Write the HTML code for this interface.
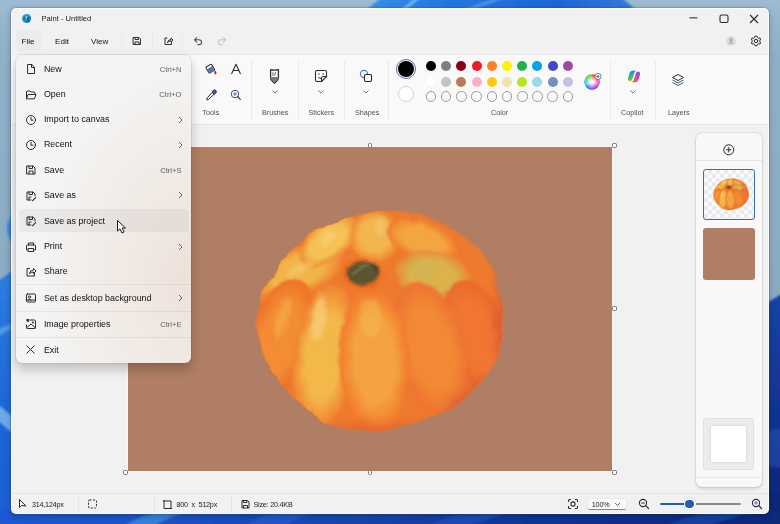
<!DOCTYPE html>
<html><head><meta charset="utf-8">
<style>
*{margin:0;padding:0;box-sizing:border-box}
html,body{width:780px;height:524px;overflow:hidden}
body{position:relative;font-family:"Liberation Sans",sans-serif;color:#111;-webkit-font-smoothing:antialiased;background:#8eadc9}
.a{position:absolute}
.t{position:absolute;white-space:nowrap;line-height:1}
svg{position:absolute;overflow:visible}
#win{left:11.3px;top:8.3px;width:757.5px;height:505.4px;border-radius:5px;background:#f1f1f1;overflow:hidden;border:1px solid rgba(255,255,255,.9);box-shadow:0 0 0 .6px rgba(40,60,80,.35),0 2px 6px rgba(0,20,40,.25)}
.sep{position:absolute;width:1px;background:#e9e9e9}
.lbl{font-size:7.2px;color:#505050}
.mi{font-size:8.9px;color:#111}
.sc{font-size:7.6px;color:#5e5e5e}
.st{font-size:7.2px;color:#1a1a1a;letter-spacing:-.2px}
.dot{position:absolute;width:10px;height:10px;border-radius:50%}
.ring{position:absolute;width:10.5px;height:10.5px;border-radius:50%;border:1px solid #9a9a9a}
.hd{position:absolute;width:4.6px;height:4.6px;border:1px solid #707070;background:#fff;border-radius:1.5px}
.ic{fill:none;stroke:#2b2b2b;stroke-width:1;stroke-linecap:round;stroke-linejoin:round}
</style></head>
<body>
<!-- desktop -->
<svg class="a" style="left:0;top:0" width="780" height="524" viewBox="0 0 780 524">
<defs>
<linearGradient id="dg" x1="0" y1="0" x2="0" y2="1">
<stop offset="0" stop-color="#9dbbd2"/><stop offset=".1" stop-color="#90b0c8"/><stop offset="1" stop-color="#86a6c0"/>
</linearGradient>
<linearGradient id="bl" x1="0" y1="0" x2="1" y2="0">
<stop offset="0" stop-color="#3a90ea"/><stop offset="0.3" stop-color="#2478e0"/><stop offset="0.7" stop-color="#1d66d8"/><stop offset="1" stop-color="#3a7ad8"/>
</linearGradient>
<linearGradient id="lb" x1="0" y1="0" x2="0" y2="1">
<stop offset="0" stop-color="#2c7ee4"/><stop offset=".5" stop-color="#1f68d8"/><stop offset="1" stop-color="#1a5cd4"/>
</linearGradient>
<linearGradient id="rb" x1="0" y1="0" x2="0" y2="1">
<stop offset="0" stop-color="#1a44a8"/><stop offset=".6" stop-color="#0f3090"/><stop offset="1" stop-color="#0b2470"/>
</linearGradient>
<linearGradient id="bb" x1="0" y1="0" x2="1" y2="0">
<stop offset="0" stop-color="#1a5ad0"/><stop offset="0.25" stop-color="#1a50c0"/><stop offset="0.5" stop-color="#1442a8"/><stop offset="0.8" stop-color="#0e2e88"/><stop offset="1" stop-color="#0d2a7a"/>
</linearGradient>
<filter id="dbl"><feGaussianBlur stdDeviation="1.2"/></filter>
</defs>
<rect width="780" height="524" fill="url(#dg)"/>
<g filter="url(#dbl)">
<path d="M385 -5 Q375 2 362 14 L640 14 Q630 4 618 -5Z" fill="url(#bl)"/>
<path d="M395 14 L420 -5 L424 -5 L400 14Z" fill="#8cd0f8" opacity=".7"/>
<path d="M455 14 Q480 2 510 -5 L516 -5 Q485 4 462 14Z" fill="#6ab8f0" opacity=".6"/>
<path d="M-5 283 Q6 276 16 268 L16 530 L-5 530Z" fill="url(#lb)"/>
<path d="M16 210 Q-2 228 16 248Z" fill="#3a8ae6"/>
<path d="M-5 330 L16 322 L16 326 L-5 338Z" fill="#6ab0f0" opacity=".6"/>
<path d="M-5 402 L16 420 L16 436 L-5 418Z" fill="#8cc8f0" opacity=".7"/>
<path d="M755 310 L785 292 L785 530 L755 530Z" fill="url(#rb)"/>
<path d="M760 440 Q772 425 785 430 L785 470 Q772 462 760 470Z" fill="#2452b0" opacity=".6"/>
<rect x="-5" y="510" width="790" height="20" fill="url(#bb)"/>
<path d="M120 530 Q140 512 175 510 L190 510 Q160 520 150 530Z" fill="#4aa0e8" opacity=".6"/>
<path d="M240 530 Q260 512 300 510 L320 510 Q290 520 280 530Z" fill="#2a60d0" opacity=".6"/>
<path d="M420 530 Q450 512 500 510 L520 510 Q480 520 460 530Z" fill="#2a5ad0" opacity=".5"/>
<path d="M660 530 Q690 512 730 510 L760 510 Q720 520 700 530Z" fill="#1f4fb8" opacity=".6"/>
</g>
</svg>

<div id="win" class="a"></div>
<!-- ribbon -->
<div class="a" style="left:12px;top:54px;width:757px;height:71px;background:#f9f9f9;border-top:1px solid #e9e9e9;border-bottom:1px solid #e4e4e4"></div>
<!-- status bar line -->
<div class="a" style="left:12px;top:493px;width:757px;height:1px;background:#e2e2e2"></div>

<!-- title bar -->
<svg style="left:21px;top:13px" width="11" height="11" viewBox="0 0 11 11">
<defs><linearGradient id="pi" x1="0" y1="0" x2="1" y2="1"><stop offset="0" stop-color="#2ab8c8"/><stop offset=".5" stop-color="#1c8ed8"/><stop offset="1" stop-color="#1058c0"/></linearGradient></defs>
<path d="M5.6 1 Q9.8 1.2 10 5.4 Q9.8 9.6 5.6 10 Q1.4 9.8 1 5.6 Q1.2 1.4 5.6 1Z" fill="url(#pi)"/>
<path d="M2 7 Q2.2 4 3.6 3 L4.4 6.5Z" fill="#3a6a50" opacity=".8"/>
<path d="M6 2.5 Q8.5 3 8.6 5.5 L6.5 8.5 Q5.5 6 6 2.5Z" fill="#2b4f8c" opacity=".7"/>
<path d="M4.5 3.5 Q6 2.5 7 3.5 L5 7Z" fill="#7fe0f0" opacity=".8"/>
</svg>
<div class="t" style="left:41.5px;top:14.6px;font-size:7.6px;color:#1a1a1a">Paint - Untitled</div>
<svg style="left:689px;top:17px" width="9" height="2"><rect x="0.5" y="0.3" width="8" height="1.1" fill="#333"/></svg>
<svg style="left:719px;top:14px" width="10" height="10" viewBox="0 0 10 10"><rect x="1" y="1" width="8" height="7.5" rx="1.6" fill="none" stroke="#2b2b2b" stroke-width="1.1"/></svg>
<svg style="left:749px;top:14px" width="10" height="10" viewBox="0 0 10 10"><path d="M1 1L9 9M9 1L1 9" stroke="#2b2b2b" stroke-width="1.1"/></svg>

<!-- menu bar -->
<div class="a" style="left:16px;top:30px;width:25.5px;height:21px;border-radius:4px;background:#ebebeb"></div>
<div class="t" style="left:21.5px;top:38px;font-size:8.1px">File</div>
<div class="t" style="left:55px;top:38px;font-size:8.1px">Edit</div>
<div class="t" style="left:91px;top:38px;font-size:8.1px">View</div>
<div class="sep" style="left:121px;top:32px;height:17px"></div>
<div class="sep" style="left:152px;top:32px;height:17px"></div>
<div class="sep" style="left:182px;top:32px;height:17px"></div>
<svg style="left:132px;top:36px" width="10" height="10" viewBox="0 0 10 10"><path class="ic" d="M1.5 1.5H7L8.5 3V8.5H1.5Z M3 1.5V3.5H6.5V1.5 M3 8.5V6H7V8.5" stroke-width="1.1"/></svg>
<svg style="left:163px;top:36px" width="11" height="10" viewBox="0 0 11 10"><path class="ic" d="M4 2H2V8.5H8.5V6.5 M4.5 6.5Q5 3.5 8 3.5V2L10 4L8 6V4.8Q6 4.8 4.5 6.5" stroke-width="1.1"/></svg>
<svg style="left:193px;top:36px" width="10" height="10" viewBox="0 0 10 10"><path d="M3.8 1.5L1.5 3.8L3.8 6.1M1.5 3.8H5.8Q8.6 3.8 8.6 6.2Q8.6 8.6 5.8 8.6H4.8" fill="none" stroke="#4a4a4a" stroke-width="1.05" stroke-linecap="round" stroke-linejoin="round"/></svg>
<svg style="left:217px;top:36px" width="10" height="10" viewBox="0 0 10 10"><path d="M6.2 1.5L8.5 3.8L6.2 6.1M8.5 3.8H4.2Q1.4 3.8 1.4 6.2Q1.4 8.6 4.2 8.6H5.2" fill="none" stroke="#c2c2c2" stroke-width="1.05" stroke-linecap="round" stroke-linejoin="round"/></svg>
<div class="a" style="left:725.5px;top:36px;width:10px;height:10px;border-radius:50%;background:#dedede"></div>
<svg style="left:725.5px;top:36px" width="10" height="10" viewBox="0 0 10 10"><circle cx="5" cy="3.8" r="1.4" fill="none" stroke="#8a8a8a" stroke-width=".8"/><path d="M2.8 7.5Q5 5.3 7.2 7.5" fill="none" stroke="#8a8a8a" stroke-width=".8"/></svg>
<svg style="left:750px;top:35px" width="12" height="12" viewBox="0 0 12 12"><path class="ic" stroke-width="1.05" d="M6 1.2 L7.1 1.4 L7.5 2.7 L8.6 3.3 L9.9 2.9 L10.6 4 L9.9 5.2 L9.9 6.8 L10.6 8 L9.9 9.1 L8.6 8.7 L7.5 9.3 L7.1 10.6 L6 10.8 L4.9 10.6 L4.5 9.3 L3.4 8.7 L2.1 9.1 L1.4 8 L2.1 6.8 L2.1 5.2 L1.4 4 L2.1 2.9 L3.4 3.3 L4.5 2.7 L4.9 1.4Z"/><circle cx="6" cy="6" r="1.7" class="ic" stroke-width="1.05"/></svg>
<!-- ribbon content -->
<!-- tools -->
<svg style="left:204px;top:62px" width="14" height="14" viewBox="0 0 14 14">
<g transform="rotate(-32 6.5 6.5)">
<rect x="3" y="3" width="6.5" height="7" rx=".8" fill="#fff" stroke="#2b2b2b" stroke-width="1"/>
<rect x="3.5" y="6" width="5.5" height="3.5" fill="#4677c9"/>
<path d="M3.5 6L9 6" stroke="#2b2b2b" stroke-width=".6"/>
</g>
<path d="M11 8.2 Q13 10.4 12.5 11.6 Q11.7 12.8 10.4 12 Q9.6 10.8 11 8.2Z" fill="#a8282c"/>
</svg>
<svg style="left:230px;top:63px" width="12" height="12" viewBox="0 0 12 12"><path d="M1.5 11L6 1.2L10.5 11M3.2 7.5H8.8" fill="none" stroke="#2b2b2b" stroke-width="1.05" stroke-linejoin="round"/></svg>
<svg style="left:205px;top:88px" width="13" height="13" viewBox="0 0 13 13">
<path d="M8 2.5 Q9.5 1 11 2.5 Q12 4 10.5 5.5 L9.5 6.5 L7 4Z" fill="#2f5fb8" stroke="#2b2b2b" stroke-width=".8"/>
<path d="M7.2 4.5 L9 6.3 L3.5 11.5 L2 12 L1.8 11 L2.2 10Z" fill="#fff" stroke="#2b2b2b" stroke-width="1" stroke-linejoin="round"/>
</svg>
<svg style="left:230px;top:89px" width="12" height="12" viewBox="0 0 12 12">
<circle cx="5" cy="5" r="3.7" fill="#fff" stroke="#3a3a3a" stroke-width=".9"/>
<path d="M7.6 7.6 L10.3 10.3" stroke="#2b2b2b" stroke-width="1.2" stroke-linecap="round"/>
<path d="M5 3V7M3 5H7" stroke="#2f6ad0" stroke-width=".9"/>
</svg>
<div class="t lbl" style="left:202.5px;top:108.8px">Tools</div>
<div class="sep" style="left:251px;top:61px;height:58px"></div>
<!-- brushes -->
<svg style="left:268px;top:67px" width="13" height="18" viewBox="0 0 13 18">
<path d="M2.6 2.6 Q6.5 3.6 10.4 2.6 L10.4 10.6 Q10.4 13 6.5 16.2 Q2.6 13 2.6 10.6Z" fill="#fff" stroke="#333" stroke-width="1.3" stroke-linejoin="round"/>
<path d="M3.3 10 H9.7 V10.6 Q9.7 12.6 6.5 15.2 Q3.3 12.6 3.3 10.6Z" fill="#7a7a7a"/>
<path d="M5 5.2 V9 M7.6 5.2 L6.6 8.6" stroke="#666" stroke-width="1"/>
</svg>
<svg style="left:271px;top:89px" width="8" height="5" viewBox="0 0 8 5"><path d="M1.5 1.5L4 4L6.5 1.5" fill="none" stroke="#666" stroke-width=".9"/></svg>
<div class="t lbl" style="left:262px;top:108.8px">Brushes</div>
<div class="sep" style="left:298px;top:61px;height:58px"></div>
<!-- stickers -->
<svg style="left:314px;top:69px" width="14" height="14" viewBox="0 0 14 14">
<path d="M3 1.5 H11 Q12.5 1.5 12.5 3 V7.5 L7.5 12.5 H3 Q1.5 12.5 1.5 11 V3 Q1.5 1.5 3 1.5Z" fill="#fff" stroke="#2b2b2b" stroke-width="1.1" stroke-linejoin="round"/>
<path d="M12.5 7.5 H9.5 Q7.5 7.5 7.5 9.5 V12.5" fill="none" stroke="#2b2b2b" stroke-width="1.1"/>
<circle cx="4.8" cy="5" r=".8" fill="#2b2b2b"/><circle cx="9.2" cy="5" r=".8" fill="#2b2b2b"/>
<path d="M4 8 Q5 9.5 7 9.3" fill="none" stroke="#2b2b2b" stroke-width="1"/>
</svg>
<svg style="left:317px;top:89px" width="8" height="5" viewBox="0 0 8 5"><path d="M1.5 1.5L4 4L6.5 1.5" fill="none" stroke="#666" stroke-width=".9"/></svg>
<div class="t lbl" style="left:308.5px;top:108.8px">Stickers</div>
<div class="sep" style="left:344px;top:61px;height:58px"></div>
<!-- shapes -->
<svg style="left:359px;top:69px" width="14" height="14" viewBox="0 0 14 14">
<circle cx="5" cy="5" r="3.6" fill="none" stroke="#3f7bd0" stroke-width="1.1"/>
<rect x="5.5" y="5.5" width="7" height="7" rx="1.2" fill="#f9f9f9" stroke="#2b2b2b" stroke-width="1.1"/>
</svg>
<svg style="left:362px;top:89px" width="8" height="5" viewBox="0 0 8 5"><path d="M1.5 1.5L4 4L6.5 1.5" fill="none" stroke="#666" stroke-width=".9"/></svg>
<div class="t lbl" style="left:355px;top:108.8px">Shapes</div>
<div class="sep" style="left:388px;top:61px;height:58px"></div>
<!-- colors -->
<div class="a" style="left:396px;top:59px;width:20px;height:20px;border-radius:50%;border:1.3px solid #5a6f9a;background:#f9f9f9"></div>
<div class="a" style="left:398px;top:61px;width:16px;height:16px;border-radius:50%;background:#000"></div>
<div class="a" style="left:398px;top:86px;width:16px;height:16px;border-radius:50%;background:#fff;border:1px solid #d2d2d2"></div>
<div class="dot" style="left:426.0px;top:61px;background:#000000"></div>
<div class="dot" style="left:426.0px;top:76.5px;background:#ffffff;box-shadow:0 0 0 .5px #eee"></div>
<div class="ring" style="left:425.8px;top:91.3px"></div>
<div class="dot" style="left:441.2px;top:61px;background:#7f7f7f"></div>
<div class="dot" style="left:441.2px;top:76.5px;background:#c3c3c3"></div>
<div class="ring" style="left:440.9px;top:91.3px"></div>
<div class="dot" style="left:456.4px;top:61px;background:#880015"></div>
<div class="dot" style="left:456.4px;top:76.5px;background:#b97a57"></div>
<div class="ring" style="left:456.1px;top:91.3px"></div>
<div class="dot" style="left:471.6px;top:61px;background:#ed1c24"></div>
<div class="dot" style="left:471.6px;top:76.5px;background:#ffaec9"></div>
<div class="ring" style="left:471.4px;top:91.3px"></div>
<div class="dot" style="left:486.8px;top:61px;background:#ff7f27"></div>
<div class="dot" style="left:486.8px;top:76.5px;background:#ffc90e"></div>
<div class="ring" style="left:486.6px;top:91.3px"></div>
<div class="dot" style="left:502.0px;top:61px;background:#fff200"></div>
<div class="dot" style="left:502.0px;top:76.5px;background:#efe4b0"></div>
<div class="ring" style="left:501.8px;top:91.3px"></div>
<div class="dot" style="left:517.2px;top:61px;background:#22b14c"></div>
<div class="dot" style="left:517.2px;top:76.5px;background:#b5e61d"></div>
<div class="ring" style="left:517.0px;top:91.3px"></div>
<div class="dot" style="left:532.4px;top:61px;background:#00a2e8"></div>
<div class="dot" style="left:532.4px;top:76.5px;background:#99d9ea"></div>
<div class="ring" style="left:532.1px;top:91.3px"></div>
<div class="dot" style="left:547.6px;top:61px;background:#3f48cc"></div>
<div class="dot" style="left:547.6px;top:76.5px;background:#7092be"></div>
<div class="ring" style="left:547.4px;top:91.3px"></div>
<div class="dot" style="left:562.8px;top:61px;background:#a349a4"></div>
<div class="dot" style="left:562.8px;top:76.5px;background:#c8bfe7"></div>
<div class="ring" style="left:562.5px;top:91.3px"></div>
<div class="t lbl" style="left:491px;top:108.8px">Color</div>
<svg style="left:584px;top:74px" width="17" height="17" viewBox="0 0 17 17">
<defs><radialGradient id="wh" cx=".5" cy=".5" r=".5"><stop offset="0" stop-color="#fff"/><stop offset=".25" stop-color="#fff" stop-opacity=".9"/><stop offset="1" stop-color="#fff" stop-opacity="0"/></radialGradient></defs>
<path d="M8 8 L8 0.3 A7.7 7.7 0 0 1 14.7 4.2Z" fill="#ff3030"/>
<path d="M8 8 L14.7 4.2 A7.7 7.7 0 0 1 14.7 11.8Z" fill="#ff2ea0"/>
<path d="M8 8 L14.7 11.8 A7.7 7.7 0 0 1 8 15.7Z" fill="#8a2be2"/>
<path d="M8 8 L8 15.7 A7.7 7.7 0 0 1 1.3 11.8Z" fill="#3060ff"/>
<path d="M8 8 L1.3 11.8 A7.7 7.7 0 0 1 1.3 4.2Z" fill="#20c0e0"/>
<path d="M8 8 L1.3 4.2 A7.7 7.7 0 0 1 8 0.3Z" fill="#40d040"/>
<circle cx="8" cy="8" r="7.7" fill="url(#wh)"/>
<circle cx="14" cy="2.5" r="3" fill="#fff" stroke="#555" stroke-width=".8"/>
<path d="M14 1V4M12.5 2.5H15.5" stroke="#444" stroke-width=".8"/>
</svg>
<div class="sep" style="left:610px;top:61px;height:58px"></div>
<!-- copilot -->
<svg style="left:626.5px;top:70px" width="14" height="13" viewBox="0 0 14 13">
<defs>
<linearGradient id="cp1" x1="0" y1="0" x2=".3" y2="1"><stop offset="0" stop-color="#1e6fe0"/><stop offset=".45" stop-color="#1fb0c8"/><stop offset=".75" stop-color="#52c43a"/><stop offset="1" stop-color="#e8c020"/></linearGradient>
<linearGradient id="cp2" x1=".7" y1="0" x2=".2" y2="1"><stop offset="0" stop-color="#8a4ad8"/><stop offset=".5" stop-color="#e04a9a"/><stop offset="1" stop-color="#f26a30"/></linearGradient>
</defs>
<path d="M1.2 7.5 L2.6 3 Q3.4 0.8 5.6 0.8 H9.6 Q7.8 1.2 7.2 3.2 L5.6 8.6 Q4.8 11.4 2.6 11.4 Q0.4 11 1.2 7.5Z" fill="url(#cp1)"/>
<path d="M12.8 5.5 L11.4 10 Q10.6 12.2 8.4 12.2 H4.4 Q6.2 11.8 6.8 9.8 L8.4 4.4 Q9.2 1.6 11.4 1.6 Q13.6 2 12.8 5.5Z" fill="url(#cp2)"/>
</svg>
<svg style="left:629px;top:89px" width="8" height="5" viewBox="0 0 8 5"><path d="M1.5 1.5L4 4L6.5 1.5" fill="none" stroke="#666" stroke-width=".9"/></svg>
<div class="t lbl" style="left:621px;top:108.8px">Copilot</div>
<div class="sep" style="left:655px;top:61px;height:58px"></div>
<!-- layers -->
<svg style="left:671px;top:73px" width="14" height="14" viewBox="0 0 14 14">
<path d="M7 1.5 L12.5 4.5 L7 7.5 L1.5 4.5Z" fill="none" stroke="#2b2b2b" stroke-width="1" stroke-linejoin="round"/>
<path d="M1.5 7 L7 10 L12.5 7" fill="none" stroke="#3d5a8a" stroke-width="1" stroke-linejoin="round"/>
<path d="M1.5 9.5 L7 12.5 L12.5 9.5" fill="none" stroke="#3d5a8a" stroke-width="1" stroke-linejoin="round"/>
</svg>
<div class="t lbl" style="left:668px;top:108.8px">Layers</div>
<!-- canvas -->
<div class="a" style="left:126.5px;top:146px;width:487px;height:326px;background:#fdf3ee"></div>
<div class="a" style="left:127.5px;top:147px;width:484.8px;height:323.6px;background:#b07e64"></div>
<svg style="left:127.5px;top:147px" width="485" height="324" viewBox="127.5 147 485 324">
<defs>
<clipPath id="pc"><path d="M257.3 334 C255.9 325.0 257.8 317.4 259 310 C260.2 302.6 261.4 296.9 264.8 289.3 C268.2 281.7 273.1 273.2 279.7 264.5 C286.3 255.8 296.2 243.8 304.5 237.2 C312.8 230.6 320.2 228.5 329.3 224.8 C338.4 221.1 348.2 217.1 359 214.8 C369.8 212.5 382.3 210.5 393.9 210.9 C405.5 211.3 417.9 213.8 428.6 217.3 C439.4 220.9 449.3 226.0 458.4 232.2 C467.5 238.4 476.6 245.0 483.2 254.5 C489.8 264.0 494.9 276.9 498 289.3 C501.1 301.7 502.8 316.6 502 329 C501.2 341.4 498.6 353.0 493 363.8 C487.4 374.6 477.4 385.3 468.3 393.6 C459.2 401.9 450.9 407.6 438.5 413.4 C426.1 419.2 408.0 425.4 393.9 428.3 C379.8 431.2 366.4 432.5 354 430.8 C341.6 429.1 330.1 424.6 319.4 418.4 C308.7 412.2 298.3 402.7 289.6 393.6 C280.9 384.5 272.6 373.7 267.2 363.8 C261.8 353.9 258.7 343.0 257.3 334Z"/></clipPath>
<radialGradient id="gA"><stop offset="0" stop-color="#f38c34"/><stop offset=".6" stop-color="#f38c34"/><stop offset="1" stop-color="#f07026"/></radialGradient>
<radialGradient id="gB"><stop offset="0" stop-color="#f3b84a"/><stop offset=".6" stop-color="#f3b84a"/><stop offset="1" stop-color="#f08030"/></radialGradient>
<radialGradient id="gC"><stop offset="0" stop-color="#f4a242"/><stop offset=".6" stop-color="#f4a242"/><stop offset="1" stop-color="#f2782a"/></radialGradient>
<radialGradient id="gD"><stop offset="0" stop-color="#f28a34"/><stop offset=".6" stop-color="#f28a34"/><stop offset="1" stop-color="#ee7230"/></radialGradient>
<radialGradient id="gE"><stop offset="0" stop-color="#f07630"/><stop offset=".6" stop-color="#f07630"/><stop offset="1" stop-color="#ea6a2c"/></radialGradient>
<radialGradient id="gT1"><stop offset="0" stop-color="#f2b448"/><stop offset=".6" stop-color="#f2b448"/><stop offset="1" stop-color="#f08030"/></radialGradient>
<radialGradient id="gT2"><stop offset="0" stop-color="#f4c254"/><stop offset=".6" stop-color="#f4c254"/><stop offset="1" stop-color="#f08a34"/></radialGradient>
<radialGradient id="gT3"><stop offset="0" stop-color="#f2b650"/><stop offset=".6" stop-color="#f2b650"/><stop offset="1" stop-color="#f08a30"/></radialGradient>
<radialGradient id="gT4"><stop offset="0" stop-color="#f3a640"/><stop offset=".6" stop-color="#f3a640"/><stop offset="1" stop-color="#f07a2c"/></radialGradient>
<radialGradient id="gT5"><stop offset="0" stop-color="#dcb24c"/><stop offset=".6" stop-color="#dcb24c"/><stop offset="1" stop-color="#e88a34"/></radialGradient>
<filter id="disp" x="-10%" y="-10%" width="120%" height="120%"><feTurbulence type="fractalNoise" baseFrequency="0.06" numOctaves="2" seed="3"/><feDisplacementMap in="SourceGraphic" scale="6" xChannelSelector="R" yChannelSelector="G"/></filter>
<filter id="b4" x="-50%" y="-50%" width="200%" height="200%"><feGaussianBlur stdDeviation="1.6"/></filter>
<filter id="b2" x="-50%" y="-50%" width="200%" height="200%"><feGaussianBlur stdDeviation="2"/></filter>
<filter id="b1" x="-50%" y="-50%" width="200%" height="200%"><feGaussianBlur stdDeviation="0.8"/></filter>
<filter id="b6" x="-50%" y="-50%" width="200%" height="200%"><feGaussianBlur stdDeviation="4"/></filter>
</defs>
<g id="pk" filter="url(#disp)">
<path d="M257.3 334 C255.9 325.0 257.8 317.4 259 310 C260.2 302.6 261.4 296.9 264.8 289.3 C268.2 281.7 273.1 273.2 279.7 264.5 C286.3 255.8 296.2 243.8 304.5 237.2 C312.8 230.6 320.2 228.5 329.3 224.8 C338.4 221.1 348.2 217.1 359 214.8 C369.8 212.5 382.3 210.5 393.9 210.9 C405.5 211.3 417.9 213.8 428.6 217.3 C439.4 220.9 449.3 226.0 458.4 232.2 C467.5 238.4 476.6 245.0 483.2 254.5 C489.8 264.0 494.9 276.9 498 289.3 C501.1 301.7 502.8 316.6 502 329 C501.2 341.4 498.6 353.0 493 363.8 C487.4 374.6 477.4 385.3 468.3 393.6 C459.2 401.9 450.9 407.6 438.5 413.4 C426.1 419.2 408.0 425.4 393.9 428.3 C379.8 431.2 366.4 432.5 354 430.8 C341.6 429.1 330.1 424.6 319.4 418.4 C308.7 412.2 298.3 402.7 289.6 393.6 C280.9 384.5 272.6 373.7 267.2 363.8 C261.8 353.9 258.7 343.0 257.3 334Z" fill="#ee7a2e" filter="url(#b1)"/>
<g clip-path="url(#pc)">
<g filter="url(#b4)">
<ellipse cx="298" cy="272" rx="48" ry="24" fill="url(#gT1)" transform="rotate(-25 298 272)"/>
<ellipse cx="328" cy="241" rx="35" ry="19" fill="url(#gT2)" transform="rotate(-40 328 241)"/>
<ellipse cx="374" cy="236" rx="24" ry="26" fill="url(#gT3)" transform="rotate(0 374 236)"/>
<ellipse cx="422" cy="240" rx="38" ry="19" fill="url(#gT4)" transform="rotate(20 422 240)"/>
<ellipse cx="432" cy="276" rx="38" ry="24" fill="url(#gT5)" transform="rotate(12 432 276)"/>
<ellipse cx="280" cy="338" rx="30" ry="62" fill="url(#gA)" transform="rotate(16 280 338)"/>
<ellipse cx="476" cy="336" rx="30" ry="58" fill="url(#gE)" transform="rotate(-18 476 336)"/>
<ellipse cx="324" cy="356" rx="31" ry="72" fill="url(#gB)" transform="rotate(7 324 356)"/>
<ellipse cx="430" cy="348" rx="34" ry="68" fill="url(#gD)" transform="rotate(-14 430 348)"/>
<ellipse cx="374" cy="360" rx="35" ry="72" fill="url(#gC)" transform="rotate(-2 374 360)"/>
</g>
<g filter="url(#b2)">
<ellipse cx="318" cy="318" rx="7" ry="22" fill="#f6d080" opacity="0.7" transform="rotate(8 318 318)"/>
<ellipse cx="300" cy="268" rx="14" ry="5" fill="#f5c868" opacity="0.7" transform="rotate(-25 300 268)"/>
<ellipse cx="327" cy="238" rx="10" ry="5" fill="#f6d07a" opacity="0.7" transform="rotate(-40 327 238)"/>
<ellipse cx="380" cy="226" rx="6" ry="10" fill="#f5ca70" opacity="0.6" transform="rotate(0 380 226)"/>
<ellipse cx="420" cy="268" rx="14" ry="7" fill="#ccb458" opacity="0.6" transform="rotate(12 420 268)"/>
<ellipse cx="370" cy="318" rx="10" ry="20" fill="#f4b84e" opacity="0.6" transform="rotate(0 370 318)"/>
<ellipse cx="282" cy="318" rx="6" ry="22" fill="#f5b04a" opacity="0.6" transform="rotate(16 282 318)"/>
</g>
<ellipse cx="505" cy="325" rx="10" ry="80" fill="#d44c30" opacity=".5" filter="url(#b6)"/>
<ellipse cx="470" cy="400" rx="34" ry="12" fill="#d44c30" opacity=".45" filter="url(#b6)" transform="rotate(-35 470 400)"/>
<ellipse cx="390" cy="432" rx="70" ry="8" fill="#dc5430" opacity=".45" filter="url(#b6)"/>
</g>
<ellipse cx="362" cy="274" rx="19" ry="13" fill="#e4601e" filter="url(#b2)"/>
<path d="M346 271 Q350 263 365 262 Q379 263 380 271 Q377 283 360 285 Q348 283 346 271Z" fill="#5a5632" filter="url(#b1)"/>
<path d="M352 274 Q358 266 368 265" stroke="#86865a" stroke-width="1.6" fill="none" filter="url(#b1)"/>
<path d="M372 266 L378 272" stroke="#3e3c22" stroke-width="1.5" fill="none" filter="url(#b1)"/>
</g>
</svg>
<div class="hd" style="left:123px;top:143px"></div>
<div class="hd" style="left:367.5px;top:143px"></div>
<div class="hd" style="left:612px;top:143px"></div>
<div class="hd" style="left:123px;top:306px"></div>
<div class="hd" style="left:612px;top:306px"></div>
<div class="hd" style="left:123px;top:470px"></div>
<div class="hd" style="left:367.5px;top:470px"></div>
<div class="hd" style="left:612px;top:470px"></div>

<!-- layers panel -->
<div class="a" style="left:696px;top:133px;width:66px;height:354px;border-radius:6px;background:#f8f8f8;box-shadow:0 0 0 .6px rgba(0,0,0,.1),0 1.5px 3px rgba(0,0,0,.12)"></div>
<svg style="left:723px;top:144px" width="12" height="12" viewBox="0 0 12 12"><circle cx="5.8" cy="5.8" r="5" fill="none" stroke="#2b2b2b" stroke-width="1"/><path d="M5.8 3.2V8.4M3.2 5.8H8.4" stroke="#2b2b2b" stroke-width="1"/></svg>
<div class="a" style="left:696px;top:159.5px;width:66px;height:1px;background:#e6e6e6"></div>
<div class="a" style="left:702.5px;top:169px;width:52px;height:51px;border-radius:3px;border:1.8px solid #3c6aac;background-color:#fafafa;background-image:linear-gradient(45deg,#e8ebee 25%,transparent 25%,transparent 75%,#e8ebee 75%),linear-gradient(45deg,#e8ebee 25%,transparent 25%,transparent 75%,#e8ebee 75%);background-size:8px 8px;background-position:0 0,4px 4px"></div>
<svg style="left:702.5px;top:169px" width="52" height="51" viewBox="0 0 52 51"><use href="#pk" transform="translate(10.5 9.5) scale(0.143) translate(-257 -211)"/></svg>
<div class="a" style="left:702.5px;top:228px;width:52px;height:52px;border-radius:3px;background:#b07e64"></div>
<div class="a" style="left:703px;top:418px;width:51px;height:52px;border-radius:3px;background:#ececec;border:1px solid #e0e0e0"></div>
<div class="a" style="left:711px;top:426px;width:35px;height:36px;background:#fff;box-shadow:0 0 3px rgba(0,0,0,.12)"></div>
<div class="a" style="left:696px;top:476.5px;width:66px;height:1px;background:#e6e6e6"></div>

<!-- status bar -->
<svg style="left:17px;top:498px" width="11" height="11" viewBox="0 0 11 11"><path d="M2.5 1.5 L2.5 9.5 L4.5 7.5 L9 8Z" fill="none" stroke="#2b2b2b" stroke-width="1" stroke-linejoin="round"/></svg>
<div class="t st" style="left:31.9px;top:501px">314,124px</div>
<div class="sep" style="left:78px;top:497px;height:14px;background:#e3e3e3"></div>
<svg style="left:86.5px;top:499px" width="11" height="11" viewBox="0 0 11 11"><rect x="1.5" y="1" width="8" height="8" rx="1" fill="none" stroke="#2b2b2b" stroke-width="1" stroke-dasharray="2 1.5"/></svg>
<div class="sep" style="left:154px;top:497px;height:14px;background:#e3e3e3"></div>
<svg style="left:161.5px;top:499px" width="11" height="11" viewBox="0 0 11 11"><path d="M2 1V9.5H10 M1 2H9V10" fill="none" stroke="#2b2b2b" stroke-width="1"/></svg>
<div class="t st" style="left:176.5px;top:501px">800&nbsp; x&nbsp; 512px</div>
<div class="sep" style="left:231px;top:497px;height:14px;background:#e3e3e3"></div>
<svg style="left:239.5px;top:499px" width="11" height="11" viewBox="0 0 11 11"><path d="M2 1.5H7.5L9 3V9H2Z M3.5 1.5V3.5H7V1.5 M3.5 9V6.5H7.5V9" fill="none" stroke="#2b2b2b" stroke-width="1"/></svg>
<div class="t st" style="left:253.4px;top:501px">Size: 20.4KB</div>
<svg style="left:566.5px;top:498px" width="12" height="12" viewBox="0 0 12 12"><path d="M1.5 4V2.5Q1.5 1.5 2.5 1.5H4 M8 1.5H9.5Q10.5 1.5 10.5 2.5V4 M10.5 8V9.5Q10.5 10.5 9.5 10.5H8 M4 10.5H2.5Q1.5 10.5 1.5 9.5V8" fill="none" stroke="#2b2b2b" stroke-width="1.1"/><circle cx="6" cy="6" r="2.1" fill="none" stroke="#2b2b2b" stroke-width="1.1"/></svg>
<div class="a" style="left:588px;top:498.5px;width:37.5px;height:11px;border-radius:2px;background:#fafafa;border-bottom:1px solid #8a8a8a;box-shadow:0 0 0 .5px #e2e2e2"></div>
<div class="t st" style="left:591.8px;top:501px">100%</div>
<svg style="left:613.5px;top:501.5px" width="7" height="5" viewBox="0 0 7 5"><path d="M1 1L3.5 3.5L6 1" fill="none" stroke="#555" stroke-width=".9"/></svg>
<svg style="left:638px;top:497.5px" width="12" height="12" viewBox="0 0 12 12"><circle cx="5" cy="5" r="3.6" fill="none" stroke="#2b2b2b" stroke-width="1.1"/><path d="M7.7 7.7L10.5 10.5" stroke="#2b2b2b" stroke-width="1.2" stroke-linecap="round"/><path d="M3.2 5H6.8" stroke="#2b2b2b" stroke-width="1"/></svg>
<div class="a" style="left:659.5px;top:502.6px;width:28px;height:2.4px;border-radius:1.2px;background:#1e5fb0"></div>
<div class="a" style="left:691px;top:502.8px;width:50px;height:2px;border-radius:1px;background:#8a8a8a"></div>
<div class="a" style="left:683.5px;top:497.7px;width:12px;height:12px;border-radius:50%;background:#fff;box-shadow:0 0 1px rgba(0,0,0,.3)"></div>
<div class="a" style="left:685.3px;top:499.5px;width:8.4px;height:8.4px;border-radius:50%;background:#1e5fb0"></div>
<svg style="left:750.5px;top:497.5px" width="12" height="12" viewBox="0 0 12 12"><circle cx="5" cy="5" r="3.6" fill="#fff" stroke="#2b2b2b" stroke-width="1.1"/><path d="M7.7 7.7L10.5 10.5" stroke="#2b2b2b" stroke-width="1.2" stroke-linecap="round"/><path d="M3 5H7M5 3V7" stroke="#2f6ad0" stroke-width=".9"/></svg>
<!-- file menu -->
<div class="a" style="left:16px;top:55px;width:175px;height:308px;border-radius:6px;background:radial-gradient(ellipse 150px 210px at 100% 72%,rgba(214,160,128,.22),rgba(214,160,128,.1) 55%,rgba(214,160,128,0) 100%),#f4f4f3;box-shadow:0 0 0 .6px rgba(0,0,0,.1),0 6px 12px rgba(0,0,0,.22)"></div>
<div class="a" style="left:19px;top:209px;width:170px;height:23px;border-radius:4px;background:rgba(0,0,0,.045)"></div>
<div class="a" style="left:16px;top:284px;width:175px;height:1px;background:rgba(0,0,0,.06)"></div>
<div class="a" style="left:16px;top:310.5px;width:175px;height:1px;background:rgba(0,0,0,.06)"></div>
<div class="a" style="left:16px;top:336.5px;width:175px;height:1px;background:rgba(0,0,0,.06)"></div>
<div class="t mi" style="left:43.9px;top:64.7px">New</div>
<div class="t sc" style="right:598.5px;top:65.7px">Ctrl+N</div>
<div class="t mi" style="left:43.9px;top:90.0px">Open</div>
<div class="t sc" style="right:598.5px;top:91.0px">Ctrl+O</div>
<div class="t mi" style="left:43.9px;top:115.3px">Import to canvas</div>
<svg style="left:177.5px;top:115.6px" width="5" height="8" viewBox="0 0 5 8"><path d="M1 1L4 4L1 7" fill="none" stroke="#555" stroke-width=".9"/></svg>
<div class="t mi" style="left:43.9px;top:140.3px">Recent</div>
<svg style="left:177.5px;top:140.6px" width="5" height="8" viewBox="0 0 5 8"><path d="M1 1L4 4L1 7" fill="none" stroke="#555" stroke-width=".9"/></svg>
<div class="t mi" style="left:43.9px;top:165.7px">Save</div>
<div class="t sc" style="right:598.5px;top:166.7px">Ctrl+S</div>
<div class="t mi" style="left:43.9px;top:191.0px">Save as</div>
<svg style="left:177.5px;top:191.3px" width="5" height="8" viewBox="0 0 5 8"><path d="M1 1L4 4L1 7" fill="none" stroke="#555" stroke-width=".9"/></svg>
<div class="t mi" style="left:43.9px;top:216.5px">Save as project</div>
<div class="t mi" style="left:43.9px;top:242.2px">Print</div>
<svg style="left:177.5px;top:242.5px" width="5" height="8" viewBox="0 0 5 8"><path d="M1 1L4 4L1 7" fill="none" stroke="#555" stroke-width=".9"/></svg>
<div class="t mi" style="left:43.9px;top:267.3px">Share</div>
<div class="t mi" style="left:43.9px;top:294px">Set as desktop background</div>
<svg style="left:177.5px;top:293.7px" width="5" height="8" viewBox="0 0 5 8"><path d="M1 1L4 4L1 7" fill="none" stroke="#555" stroke-width=".9"/></svg>
<div class="t mi" style="left:43.9px;top:319.5px">Image properties</div>
<div class="t sc" style="right:598.5px;top:320.5px">Ctrl+E</div>
<div class="t mi" style="left:43.9px;top:345.7px">Exit</div>
<!-- menu icons -->
<svg style="left:25px;top:63px" width="12" height="12" viewBox="0 0 12 12"><path class="ic" d="M3 1.5H6.8L9.5 4.2V10.5H3Z M6.5 1.5V4.5H9.5" stroke-width="1"/></svg>
<svg style="left:24.5px;top:88.5px" width="12" height="12" viewBox="0 0 12 12"><path class="ic" d="M1.5 9.5V3Q1.5 2 2.5 2H5L6 3H9Q10 3 10 4V5 M1.5 9.5L3 5.5H11L9.5 9.5Z" stroke-width="1"/></svg>
<svg style="left:24.5px;top:113.5px" width="12" height="12" viewBox="0 0 12 12"><circle class="ic" cx="6" cy="6" r="4.5" stroke-width="1"/><path class="ic" d="M6 3.5V6.2H8" stroke-width="1"/></svg>
<svg style="left:24.5px;top:138.5px" width="12" height="12" viewBox="0 0 12 12"><circle class="ic" cx="6" cy="6" r="4.5" stroke-width="1"/><path class="ic" d="M6 3.5V6.2H8" stroke-width="1"/></svg>
<svg style="left:24.5px;top:164px" width="12" height="12" viewBox="0 0 12 12"><path class="ic" d="M2 2H8L10 4V10H2Z M4 2V4.5H7.5V2 M4 10V7H8V10" stroke-width="1"/></svg>
<svg style="left:24.5px;top:189.5px" width="12" height="12" viewBox="0 0 12 12"><path class="ic" d="M6 10H2V2H8L10 4V6 M4 2V4.5H7.5V2 M4 10V7H6" stroke-width="1"/><path d="M7 10.5L10.5 7L11.3 7.8L7.8 11.3H7Z" fill="#2b2b2b"/></svg>
<svg style="left:24.5px;top:215px" width="12" height="12" viewBox="0 0 12 12"><path class="ic" d="M6 10H2V2H8L10 4V6 M4 2V4.5H7.5V2 M4 10V7H6" stroke-width="1"/><path d="M7 10.5L10.5 7L11.3 7.8L7.8 11.3H7Z" fill="#2b2b2b"/></svg>
<svg style="left:24.5px;top:240.5px" width="12" height="12" viewBox="0 0 12 12"><path class="ic" d="M3.5 4V2H8.5V4 M2.5 9H1.5V5Q1.5 4 2.5 4H9.5Q10.5 4 10.5 5V9H9.5 M3.5 7.5H8.5V10.5H3.5Z" stroke-width="1"/></svg>
<svg style="left:24.5px;top:265.5px" width="12" height="12" viewBox="0 0 12 12"><path class="ic" d="M4.5 2.5H2V10H9.5V7.5 M4.5 7.5Q5 4 8.5 4V2.5L11 5L8.5 7.5V6Q6 6 4.5 7.5" stroke-width="1"/></svg>
<svg style="left:24.5px;top:291.5px" width="12" height="12" viewBox="0 0 12 12"><path class="ic" d="M2.5 2H9.5Q10.5 2 10.5 3V9Q10.5 10 9.5 10H2.5Q1.5 10 1.5 9V3Q1.5 2 2.5 2Z M1.5 8H10.5" stroke-width="1"/><circle cx="4.5" cy="5" r="1.1" class="ic" stroke-width="1"/><path class="ic" d="M3 8Q4.5 6.5 6 8" stroke-width="1"/></svg>
<svg style="left:24.5px;top:317.5px" width="12" height="12" viewBox="0 0 12 12"><path class="ic" d="M5 2H9.5Q10.5 2 10.5 3V9.5Q10.5 10.5 9.5 10.5H2.5Q1.5 10.5 1.5 9.5V7 M1.5 10L6 6L10.5 10" stroke-width="1"/><path d="M1.5 1H4V3.5H1.5Z" fill="#2b2b2b"/><path d="M3 1.5V4" stroke="#2b2b2b"/><circle cx="8" cy="4.5" r="1" fill="#2b2b2b"/></svg>
<svg style="left:25px;top:344px" width="11" height="11" viewBox="0 0 11 11"><path d="M1.5 1.5L9.5 9.5M9.5 1.5L1.5 9.5" stroke="#2b2b2b" stroke-width="1"/></svg>
<!-- cursor -->
<svg style="left:116px;top:219px" width="12" height="16" viewBox="0 0 12 16"><path d="M1.5 1.5 L1.5 12 L4 9.8 L6 14 L8 13 L6.2 9 L9.5 9Z" fill="#fff" stroke="#1a1a1a" stroke-width="1" stroke-linejoin="round"/></svg>
</body></html>
